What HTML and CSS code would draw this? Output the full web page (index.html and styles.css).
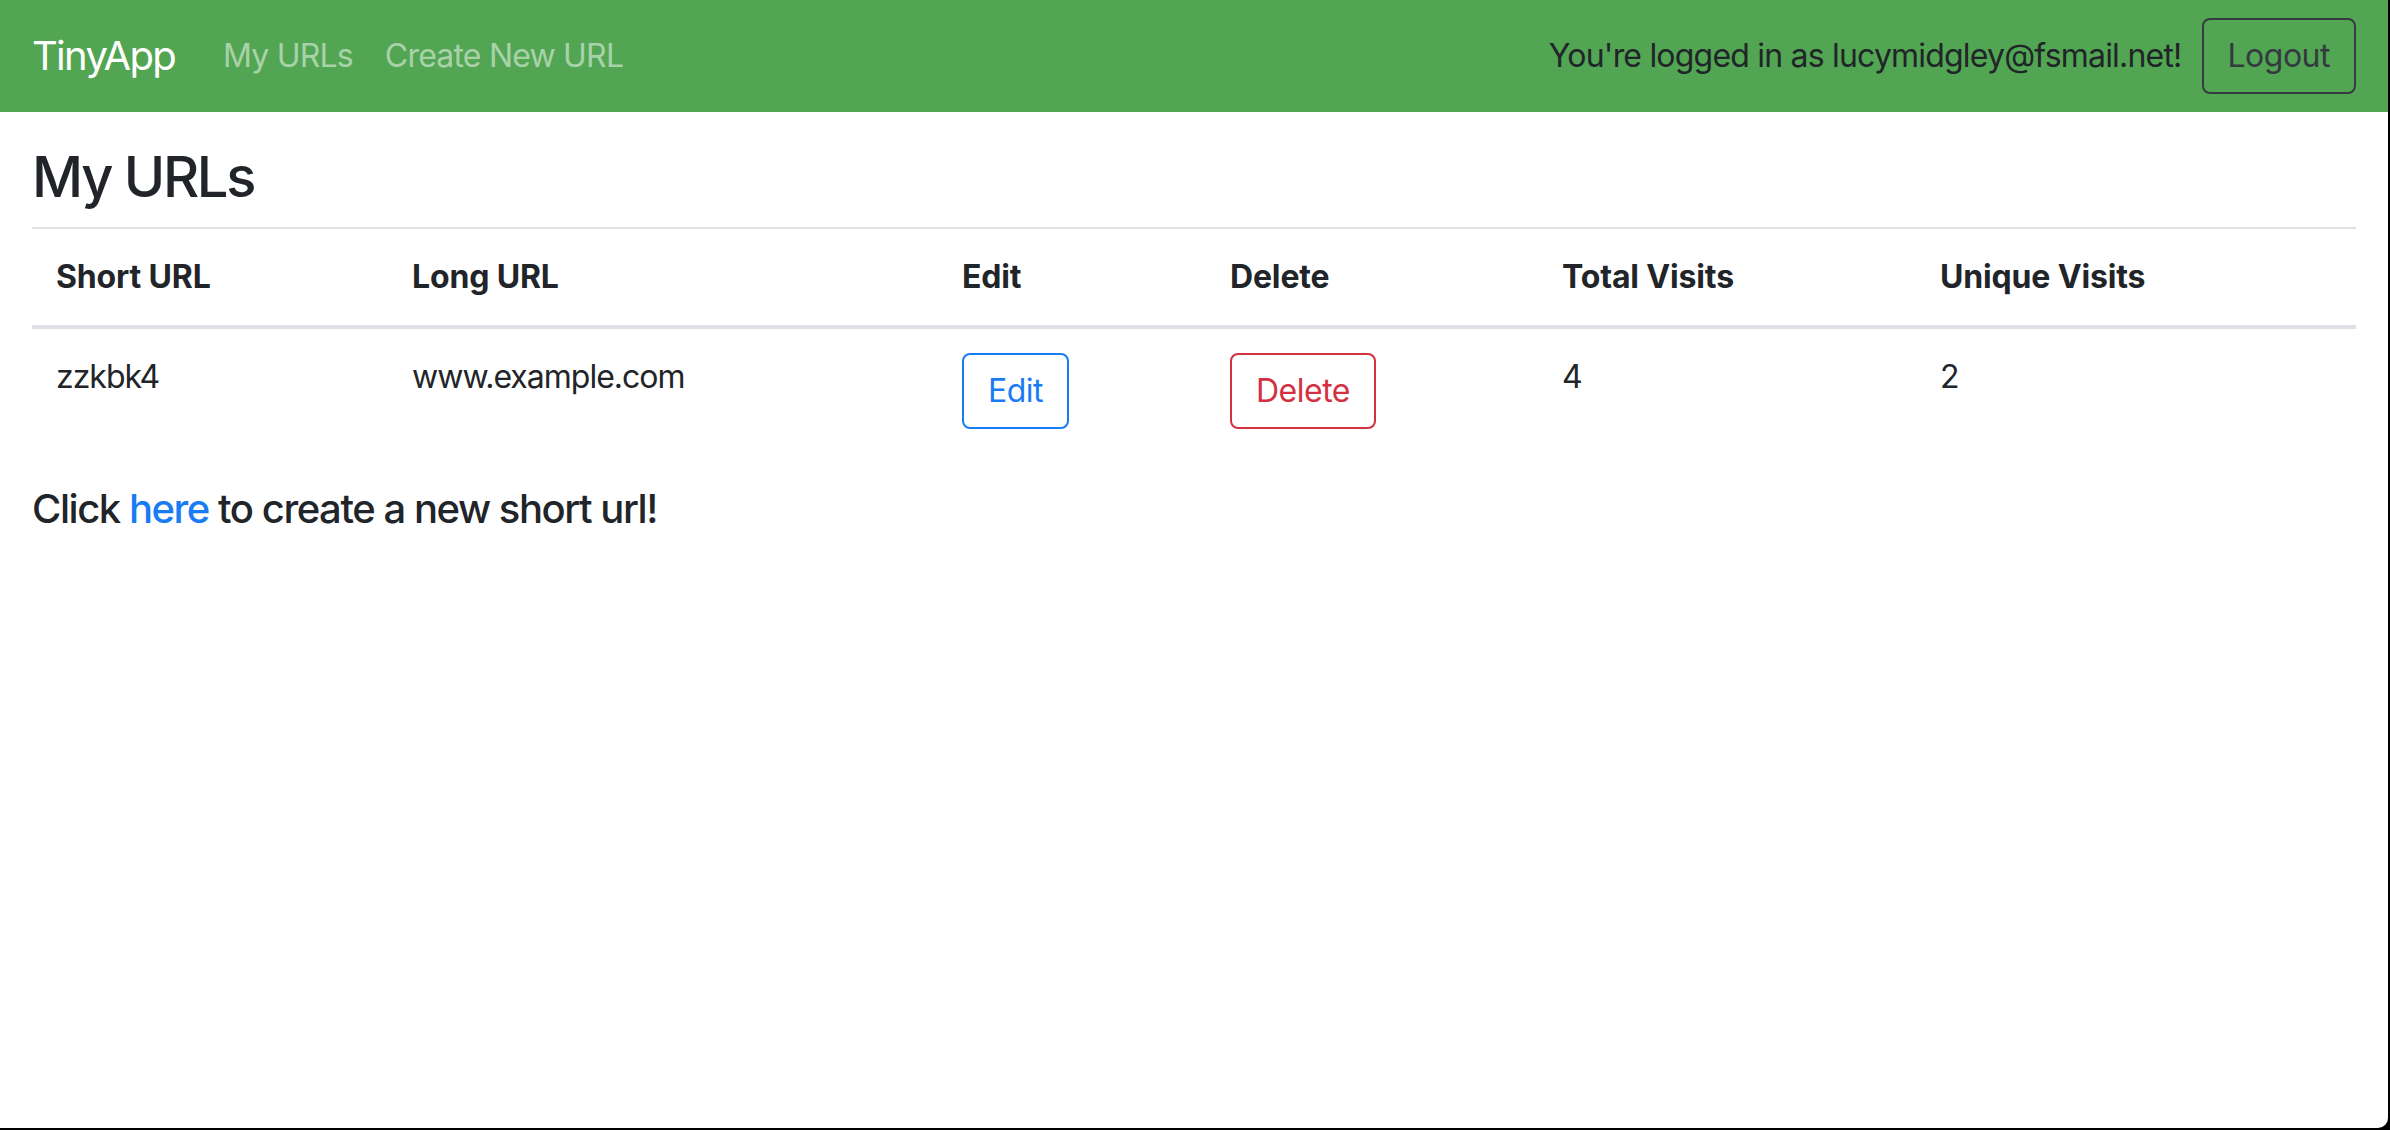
FILE: index.html
```html
<!DOCTYPE html>
<html lang="en">
<head>
<meta charset="utf-8">
<title>TinyApp</title>
<link rel="stylesheet" href="styles.css">
</head>
<body>
<div class="window">
  <nav class="navbar">
    <a class="brand" href="#">TinyApp</a>
    <ul class="nav-links">
      <li><a class="nav-link" href="#">My URLs</a></li>
      <li><a class="nav-link" href="#">Create New URL</a></li>
    </ul>
    <div class="nav-right">
      <span class="nav-text">You're logged in as lucymidgley@fsmail.net!</span>
      <button class="btn btn-outline-dark" type="button">Logout</button>
    </div>
  </nav>
  <main class="content">
    <h3 class="page-title">My URLs</h3>
    <table class="url-table">
      <colgroup>
        <col class="col-short">
        <col class="col-long">
        <col class="col-edit">
        <col class="col-delete">
        <col class="col-total">
        <col class="col-unique">
      </colgroup>
      <thead>
        <tr>
          <th>Short URL</th>
          <th>Long URL</th>
          <th>Edit</th>
          <th>Delete</th>
          <th>Total Visits</th>
          <th>Unique Visits</th>
        </tr>
      </thead>
      <tbody>
        <tr>
          <td>zzkbk4</td>
          <td>www.example.com</td>
          <td><a class="btn btn-outline-primary" href="#">Edit</a></td>
          <td><form class="inline-form"><button class="btn btn-outline-danger" type="button">Delete</button></form></td>
          <td>4</td>
          <td>2</td>
        </tr>
      </tbody>
    </table>
    <h5 class="cta">Click <a class="link" href="#">here</a> to create a new short url!</h5>
  </main>
</div>
</body>
</html>
```

FILE: styles.css
```css
* { box-sizing: border-box; }

html {
  background: #000;
}

body {
  margin: 0;
  font-family: Inter, "Noto Sans", "Liberation Sans", sans-serif;
  font-size: 32px;
  line-height: 1.5;
  color: #212529;
}

.window {
  width: 2388px;
  height: 1128px;
  background: #fff;
  border-bottom-right-radius: 10px;
  overflow: hidden;
}

/* Navbar */
.navbar {
  height: 112px;
  background: #52a552;
  display: flex;
  align-items: center;
  padding: 16px 32px;
}

.brand {
  font-size: 40px;
  line-height: 1.5;
  padding: 10px 0;
  margin-right: 32px;
  color: #fff;
  text-decoration: none;
  letter-spacing: -1.7px;
}

.nav-links {
  list-style: none;
  margin: 0;
  padding: 0;
  display: flex;
}

.nav-link {
  display: block;
  padding: 16px 16px;
  color: rgba(255, 255, 255, 0.5);
  text-decoration: none;
  letter-spacing: -0.8px;
}

.nav-right {
  margin-left: auto;
  display: flex;
  align-items: center;
  gap: 20px;
}

.nav-text {
  color: #212529;
  letter-spacing: -0.8px;
}

/* Buttons */
.btn {
  display: inline-block;
  font-family: inherit;
  font-size: 32px;
  line-height: 1.5;
  padding: 12px 24px;
  border: 2px solid transparent;
  border-radius: 8px;
  background: transparent;
  text-decoration: none;
  letter-spacing: -0.5px;
  cursor: pointer;
}

.btn-outline-dark {
  color: #343a40;
  border-color: #343a40;
}

.btn-outline-primary {
  color: #1a7cf5;
  border-color: #1a7cf5;
}

.btn-outline-danger {
  color: #d2323f;
  border-color: #d2323f;
}

.inline-form {
  margin: 0;
  display: inline;
}

/* Content */
.content {
  padding: 32px 32px 0;
}

.page-title {
  margin: 0 0 16px;
  font-size: 56px;
  line-height: 1.2;
  font-weight: 500;
  letter-spacing: -2.3px;
}

.url-table {
  width: 100%;
  table-layout: fixed;
  border-collapse: collapse;
  margin-bottom: 32px;
}

.col-short { width: 356px; }
.col-long { width: 550px; }
.col-edit { width: 268px; }
.col-delete { width: 332px; }
.col-total { width: 378px; }
.col-unique { width: 440px; }

.url-table th,
.url-table td {
  padding: 24px;
  text-align: left;
  vertical-align: top;
  border-top: 2px solid #dee2e6;
  letter-spacing: -1px;
}

.url-table thead th {
  font-weight: 700;
  letter-spacing: -0.15px;
  border-bottom: 4px solid #dee2e6;
}

.cta {
  margin: 0;
  font-size: 40px;
  line-height: 1.2;
  font-weight: 500;
  letter-spacing: -1.45px;
}

.link {
  color: #1a7cf5;
  text-decoration: none;
}
```
